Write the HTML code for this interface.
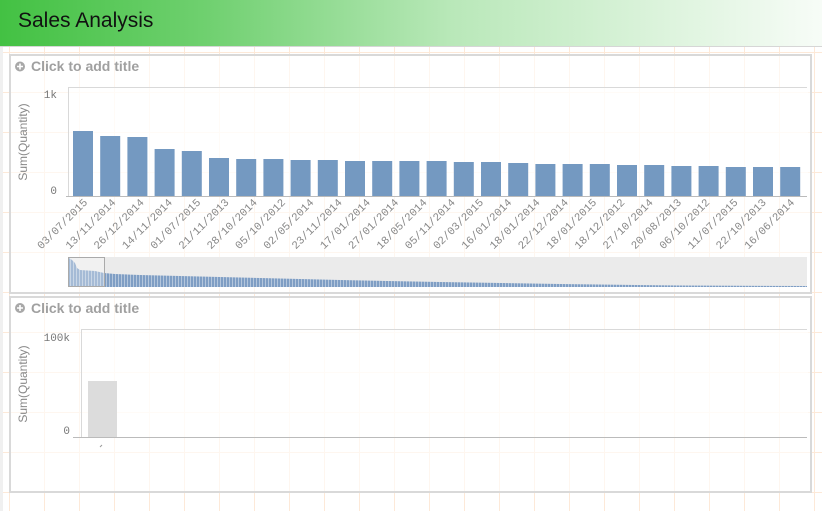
<!DOCTYPE html>
<html><head><meta charset="utf-8">
<style>
html,body{margin:0;padding:0;width:822px;height:511px;overflow:hidden;background:#fff;font-family:"Liberation Sans",sans-serif;}
.hdr{position:absolute;left:0;top:0;width:822px;height:46px;background:linear-gradient(90deg,#43c143 0%,#6fd06f 25%,#b9e8b9 55%,#f7fcf7 100%);border-bottom:1px solid #d6d6d6;}
.hdr span{position:absolute;left:18px;top:9px;font-size:21px;color:#111;}
svg{position:absolute;left:0;top:0;}
</style></head><body>
<svg width="822" height="511" xmlns="http://www.w3.org/2000/svg" font-family="Liberation Sans, sans-serif">
<defs>
<pattern id="gv" x="9" y="0" width="35" height="511" patternUnits="userSpaceOnUse"><rect x="0" y="0" width="1" height="511" fill="#fde9d8"/></pattern>
<pattern id="gh" x="0" y="12" width="822" height="40" patternUnits="userSpaceOnUse"><rect x="0" y="0" width="822" height="1" fill="#fde9d8"/></pattern>
<pattern id="st" x="68" y="0" width="3" height="40" patternUnits="userSpaceOnUse"><rect x="0" y="0" width="2" height="40" fill="#7f9ec4"/><rect x="2" y="0" width="1" height="40" fill="#b4c6dc"/></pattern>
</defs>
<rect x="0" y="47" width="822" height="464" fill="url(#gv)"/>
<rect x="0" y="47" width="822" height="464" fill="url(#gh)"/>
<rect x="0" y="47" width="3" height="464" fill="#f0f0f0"/>
<!-- panel 1 -->
<rect x="10" y="55" width="801" height="238" fill="#fff" fill-opacity="0.6" stroke="#d9d9d9" stroke-width="2"/>
<circle cx="20" cy="66.5" r="5" fill="#a8a8a8"/><path d="M17 66.5h6M20 63.5v6" stroke="#fff" stroke-width="1.6"/>
<text x="31" y="71" font-size="14" font-weight="bold" fill="#a0a0a0">Click to add title</text>
<text transform="translate(27,142) rotate(-90)" text-anchor="middle" font-size="12" fill="#888">Sum(Quantity)</text>
<text x="57" y="98" text-anchor="end" font-family="Liberation Mono, monospace" font-size="11" fill="#777">1k</text>
<text x="57" y="194" text-anchor="end" font-family="Liberation Mono, monospace" font-size="11" fill="#777">0</text>
<rect x="68" y="87" width="740" height="109" fill="#fff" fill-opacity="0.5"/>
<path d="M68 87.5H807M68.5 87V196" stroke="#d9d9d9" fill="none"/>
<path d="M66 196.5H807" stroke="#bbb"/>
<g fill="#7499c1" id="bars"></g>
<g id="labs" font-family="Liberation Mono, monospace" font-size="11" fill="#888"></g>
<rect x="68" y="257" width="739" height="30" fill="#ebebeb"/>
<path d="M69 287 L69 258 L72 260 L75 263 L77 268 L80 270 L95 271 L104 273 L115 274 L140 275 L180 276 L260 278 L340 280 L440 282 L560 284 L680 285.5 L807 286 L807 287 Z" fill="url(#st)"/>
<rect x="68.5" y="257.5" width="36" height="29" fill="#fff" fill-opacity="0.3" stroke="#aaa"/>
<!-- panel 2 -->
<rect x="10" y="297" width="801" height="195" fill="#fff" fill-opacity="0.6" stroke="#d9d9d9" stroke-width="2"/>
<circle cx="20" cy="308" r="5" fill="#a8a8a8"/><path d="M17 308h6M20 305v6" stroke="#fff" stroke-width="1.6"/>
<text x="31" y="313" font-size="14" font-weight="bold" fill="#a0a0a0">Click to add title</text>
<text transform="translate(27,384) rotate(-90)" text-anchor="middle" font-size="12" fill="#888">Sum(Quantity)</text>
<text x="70" y="341" text-anchor="end" font-family="Liberation Mono, monospace" font-size="11" fill="#777">100k</text>
<text x="70" y="434" text-anchor="end" font-family="Liberation Mono, monospace" font-size="11" fill="#777">0</text>
<rect x="81" y="329" width="727" height="108" fill="#fff" fill-opacity="0.5"/>
<path d="M81 329.5H807M81.5 329V437" stroke="#d9d9d9" fill="none"/>
<rect x="88" y="381" width="29" height="56" fill="#dcdcdc"/>
<path d="M73 437.5H807" stroke="#bbb"/>
<path d="M100 447l2 -2" stroke="#999"/>
</svg>
<div class="hdr"><span>Sales Analysis</span></div>
<script>
var tops=[131,136,137,149,151,158,159,159,160,160,161,161,161,161,162,162,163,164,164,164,165,165,166,166,167,167,167];
var labs=["03/07/2015","13/11/2014","26/12/2014","14/11/2014","01/07/2015","21/11/2013","28/10/2014","05/10/2012","02/05/2014","23/11/2014","17/01/2014","27/01/2014","18/05/2014","05/11/2014","02/03/2015","16/01/2014","18/01/2014","22/12/2014","18/01/2015","18/12/2012","27/10/2014","20/08/2013","06/10/2012","11/07/2015","22/10/2013","16/06/2014"];
var ns="http://www.w3.org/2000/svg",b=document.getElementById("bars"),l=document.getElementById("labs");
for(var i=0;i<27;i++){var c=83+i*27.2;var r=document.createElementNS(ns,"rect");r.setAttribute("x",c-10);r.setAttribute("y",tops[i]);r.setAttribute("width",20);r.setAttribute("height",196-tops[i]);b.appendChild(r);}
for(var i=0;i<labs.length;i++){var c=83+i*(790-83)/(labs.length-1);var t=document.createElementNS(ns,"text");t.setAttribute("text-anchor","end");t.setAttribute("transform","translate("+(c+5)+",203) rotate(-45)");t.textContent=labs[i];l.appendChild(t);}
</script>
</body></html>
